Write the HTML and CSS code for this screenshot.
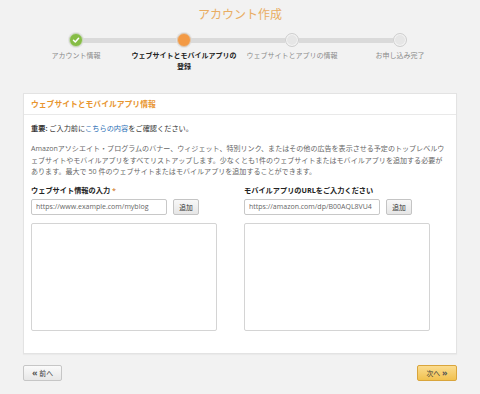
FILE: index.html
```html
<!DOCTYPE html>
<html lang="ja">
<head>
    <meta charset="UTF-8">
    <meta name="viewport" content="width=device-width, initial-scale=1.0">
    <title>アカウント作成</title>
    <link rel="stylesheet" href="styles.css">
</head>
<body>
<div class="page">
    <h1 class="title">アカウント作成</h1>

    <ol class="steps">
        <li class="step done">
            <div class="track">
                <span class="dot">
                    <svg width="8" height="8" viewBox="0 0 8 8"><path d="M1.5 4.2 L3.3 6 L6.6 2.2" fill="none" stroke="#fff" stroke-width="1.5" stroke-linecap="round" stroke-linejoin="round"/></svg>
                </span>
            </div>
            <span class="label">アカウント情報</span>
        </li>
        <li class="step current">
            <div class="track"><span class="dot"></span></div>
            <span class="label">ウェブサイトとモバイルアプリの<br>登録</span>
        </li>
        <li class="step">
            <div class="track"><span class="dot"></span></div>
            <span class="label">ウェブサイトとアプリの情報</span>
        </li>
        <li class="step">
            <div class="track"><span class="dot"></span></div>
            <span class="label">お申し込み完了</span>
        </li>
    </ol>

    <div class="card">
        <div class="card-head">ウェブサイトとモバイルアプリ情報</div>
        <div class="card-body">
            <p class="notice"><b>重要:</b> ご入力前に<a href="#">こちらの内容</a>をご確認ください。</p>
            <p class="desc">Amazonアソシエイト・プログラムのバナー、ウィジェット、特別リンク、またはその他の広告を表示させる予定のトップレベルウェブサイトやモバイルアプリをすべてリストアップします。少なくとも1件のウェブサイトまたはモバイルアプリを追加する必要があります。最大で 50 件のウェブサイトまたはモバイルアプリを追加することができます。</p>

            <div class="cols">
                <div class="col">
                    <label class="field-label" for="site">ウェブサイト情報の入力 <span class="req">*</span></label>
                    <div class="add-row">
                        <input type="text" id="site" placeholder="https://www.example.com/myblog">
                        <button class="btn-add">追加</button>
                    </div>
                    <textarea class="list"></textarea>
                </div>
                <div class="col">
                    <label class="field-label" for="app">モバイルアプリのURLをご入力ください</label>
                    <div class="add-row">
                        <input type="text" id="app" placeholder="https://amazon.com/dp/B00AQL8VU4">
                        <button class="btn-add">追加</button>
                    </div>
                    <textarea class="list"></textarea>
                </div>
            </div>
        </div>
    </div>

    <div class="nav">
        <button class="btn-prev"><span class="arr">«</span> 前へ</button>
        <button class="btn-next">次へ <span class="arr">»</span></button>
    </div>
</div>
</body>
</html>
```

FILE: styles.css
```css
body {
    margin: 0;
    background-color: #f2f2f2;
    font-family: "Open Sans", "Noto Sans CJK JP", sans-serif;
    color: #333;
}
.page {
    padding: 7px 23px 0;
}
.title {
    margin: 0;
    text-align: center;
    font-size: 12px;
    line-height: 16px;
    font-weight: normal;
    color: #e9ad62;
}

/* progress */
.steps {
    list-style: none;
    margin: 10px 3px 0 -1px;
    padding: 0;
    display: grid;
    grid-template-columns: repeat(4, 1fr);
}
.step {
    display: flex;
    flex-direction: column;
    align-items: center;
}
.track {
    width: 100%;
    height: 14px;
    display: flex;
    align-items: center;
}
.track::before,
.track::after {
    content: "";
    flex: 1;
    height: 5px;
    background: #dadada;
}
.step:first-child .track::before,
.step:last-child .track::after {
    background: transparent;
}
.dot {
    width: 12px;
    height: 12px;
    border-radius: 50%;
    border: 1px solid #cfcfcf;
    background: #e6e6e6;
    box-shadow: inset 0 0 0 1px #f4f4f4;
    display: flex;
    align-items: center;
    justify-content: center;
}
.done .dot {
    background: #86bd45;
    border-color: #c9d9b8;
    box-shadow: 0 0 0 1px #e3e3e3;
}
.current .dot {
    background: #f39a45;
    border-color: #e1c6aa;
    box-shadow: 0 0 0 1px #e3e3e3;
}
.label {
    margin-top: 3px;
    font-size: 7px;
    line-height: 11px;
    color: #8a8a8a;
    text-align: center;
}
.current .label {
    color: #222;
    font-weight: bold;
}

/* card */
.card {
    margin-top: 21px;
    background: #fff;
    border: 1px solid #e3e3e3;
    box-shadow: 0 1px 1px rgba(0, 0, 0, 0.03);
}
.card-head {
    padding: 0 7px;
    line-height: 20px;
    font-size: 7.8px;
    font-weight: bold;
    color: #e8952e;
    border-bottom: 1px solid #e9e9e9;
}
.card-body {
    padding: 8px 7px 22px;
}
.notice {
    margin: 0;
    font-size: 7.2px;
    line-height: 10px;
    color: #333;
}
.notice a {
    color: #2a6fb5;
    text-decoration: none;
}
.desc {
    margin: 10px 0 0;
    font-size: 7.05px;
    line-height: 11.5px;
    color: #666;
}
.cols {
    margin-top: 7px;
    display: grid;
    grid-template-columns: 213px 1fr;
}
.field-label {
    display: block;
    font-size: 7.2px;
    line-height: 10px;
    font-weight: bold;
    color: #222;
}
.req {
    color: #c60;
    font-weight: normal;
}
.add-row {
    margin-top: 4px;
    display: flex;
    gap: 6px;
}
.add-row input {
    box-sizing: border-box;
    width: 136px;
    height: 16px;
    padding: 0 4px;
    border: 1px solid #c8c8c8;
    border-radius: 2px;
    font-family: inherit;
    font-size: 7px;
}
.add-row input::placeholder {
    color: #666;
}
.btn-add {
    box-sizing: border-box;
    width: 26px;
    height: 16px;
    padding: 0;
    border: 1px solid #c4c4c4;
    border-radius: 2px;
    background: linear-gradient(#f8f8f8, #e6e6e6);
    font-family: inherit;
    font-size: 6.8px;
    color: #333;
}
.list {
    display: block;
    box-sizing: border-box;
    margin-top: 8px;
    width: 186px;
    height: 108px;
    border: 1px solid #d4d4d4;
    border-radius: 2px;
    resize: none;
}

/* bottom buttons */
.nav {
    margin-top: 11px;
    display: flex;
    justify-content: space-between;
}
.nav button {
    box-sizing: border-box;
    height: 16px;
    padding: 0;
    border-radius: 2px;
    font-family: inherit;
    font-size: 6.8px;
    color: #333;
}
.btn-prev {
    width: 39px;
    border: 1px solid #c6c6c6;
    background: linear-gradient(#fafafa, #e7e7e7);
}
.btn-next {
    width: 40px;
    border: 1px solid #d9a53c;
    background: linear-gradient(#fbdc8f, #f1c14f);
}
.arr {
    font-weight: bold;
    font-size: 9px;
    color: #555;
}
```
